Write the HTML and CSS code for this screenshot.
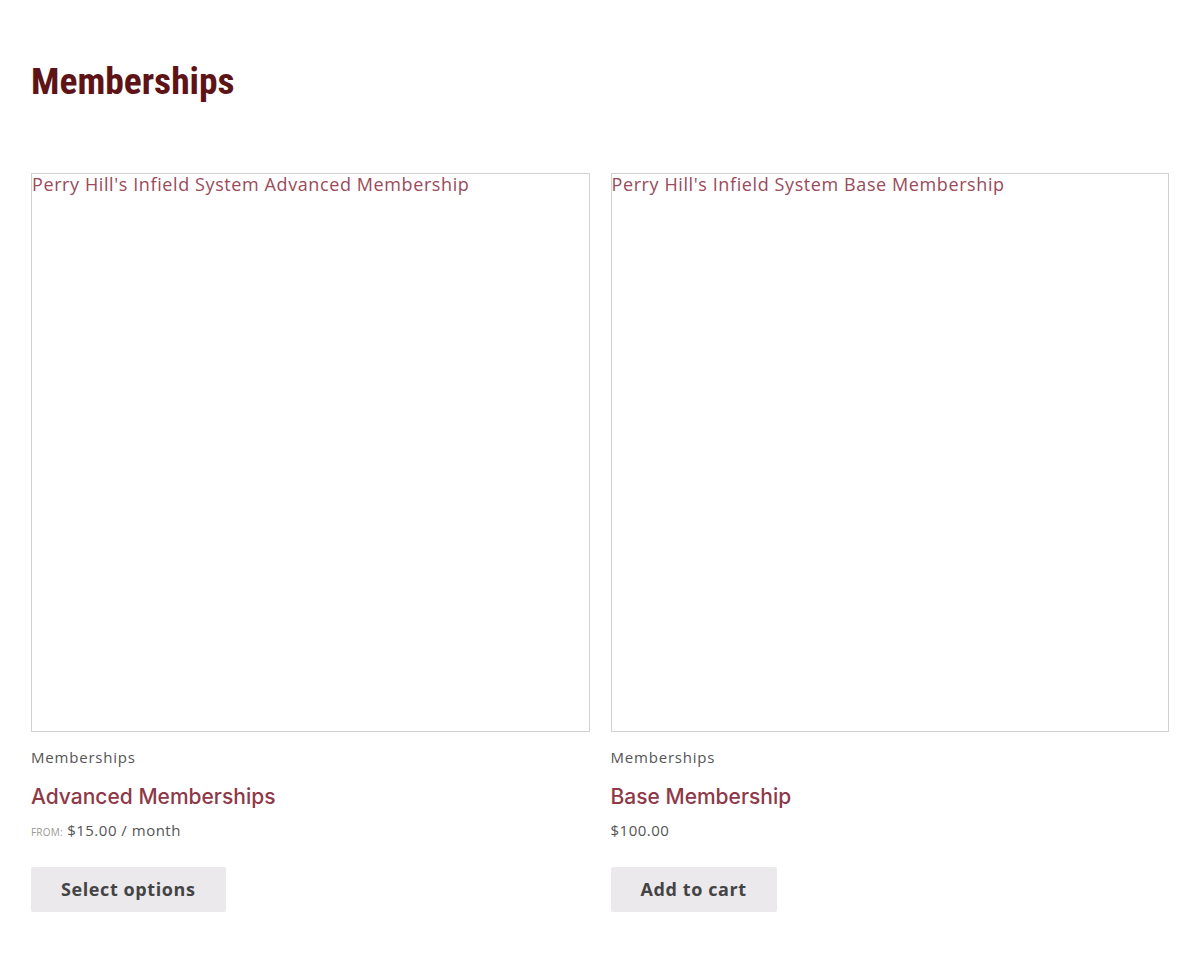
FILE: index.html
```html
<!DOCTYPE html>
<html lang="en">
<head>
    <meta charset="UTF-8">
    <meta name="viewport" content="width=device-width, initial-scale=1.0">
    <title>Memberships</title>
    <link rel="stylesheet" href="styles.css">
</head>
<body>
    <div class="page">
        <h1 class="page-title">Memberships</h1>

        <ul class="products">
            <!-- advanced -->
            <li class="product">
                <a class="product-image" href="#">Perry Hill's Infield System Advanced Membership</a>
                <div class="product-cat">Memberships</div>
                <h2 class="product-title"><a href="#">Advanced Memberships</a></h2>
                <div class="price"><span class="from">From:</span> $15.00 / month</div>
                <a class="button" href="#">Select options</a>
            </li>

            <!-- base -->
            <li class="product">
                <a class="product-image" href="#">Perry Hill's Infield System Base Membership</a>
                <div class="product-cat">Memberships</div>
                <h2 class="product-title"><a href="#">Base Membership</a></h2>
                <div class="price">$100.00</div>
                <a class="button" href="#">Add to cart</a>
            </li>
        </ul>
    </div>
</body>
</html>
```

FILE: styles.css
```css
body {
    margin: 0;
    background-color: #fff;
    font-family: "Open Sans", Arial, sans-serif;
    color: #555;
}
.page {
    padding: 52px 31px 40px;
}
.page-title {
    font-family: "Liberation Sans Narrow", "Roboto Condensed", "Liberation Sans", sans-serif;
    font-size: 37.5px;
    font-weight: bold;
    color: #5e1316;
    margin: 0 0 63px;
    line-height: 58px;
}
.products {
    list-style: none;
    margin: 0;
    padding: 0;
    display: grid;
    grid-template-columns: 1fr 1fr;
    gap: 21px;
}
.product-image {
    display: block;
    aspect-ratio: 1 / 1;
    box-sizing: border-box;
    border: 1px solid #d2d2d2;
    color: #9a4a5a;
    font-size: 18px;
    line-height: 20px;
    letter-spacing: 0.6px;
    text-decoration: none;
}
.product-cat {
    margin-top: 14px;
    font-size: 15px;
    letter-spacing: 0.8px;
    color: #555;
    line-height: 22px;
}
.product-title {
    margin: 16px 0 0;
    font-family: "Inter", "Open Sans", sans-serif;
    font-size: 21px;
    font-weight: 500;
    line-height: 26px;
}
.product-title a {
    color: #8e3848;
    text-decoration: none;
}
.price {
    margin-top: 9px;
    font-size: 15px;
    letter-spacing: 0.5px;
    line-height: 22px;
    color: #555;
}
.from {
    font-size: 10px;
    line-height: 1;
    letter-spacing: 0.2px;
    text-transform: uppercase;
    color: #999;
}
.button {
    display: inline-block;
    margin-top: 26px;
    padding: 0 30px;
    height: 45px;
    line-height: 45px;
    background-color: #ebe9ec;
    color: #444;
    font-size: 18px;
    font-weight: bold;
    letter-spacing: 0.6px;
    text-decoration: none;
    border-radius: 2px;
}
```
